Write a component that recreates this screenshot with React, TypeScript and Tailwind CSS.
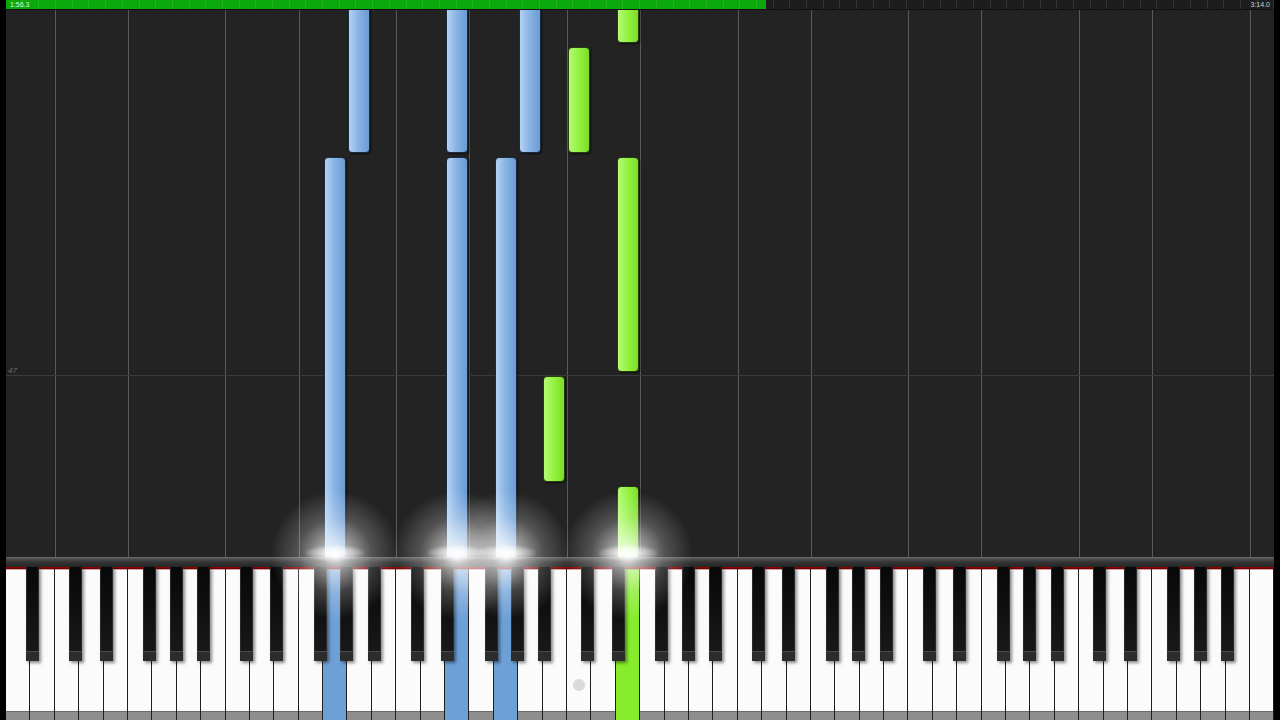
import React from 'react';

// 88-key layout: 52 white keys starting at A0
const W = 1268 / 52;
const ROLL_TOP = 10;
const NAMES = ['A', 'B', 'C', 'D', 'E', 'F', 'G'];
// black key left offset from the right boundary of the white key it follows
const BLACK_OFFSET: Record<string, number> = { A: -4, C: -10, D: -4, F: -9, G: -7 };

type Note = { key: number; y1: number; y2: number; hand: 'left' | 'right' };

const NOTES: Note[] = [
  { key: 14, y1: 0, y2: 153, hand: 'left' },
  { key: 18, y1: 0, y2: 153, hand: 'left' },
  { key: 21, y1: 0, y2: 153, hand: 'left' },
  { key: 13, y1: 157, y2: 575, hand: 'left' },
  { key: 18, y1: 157, y2: 575, hand: 'left' },
  { key: 20, y1: 157, y2: 575, hand: 'left' },
  { key: 25, y1: 0, y2: 43, hand: 'right' },
  { key: 23, y1: 47, y2: 153, hand: 'right' },
  { key: 25, y1: 157, y2: 372, hand: 'right' },
  { key: 22, y1: 376, y2: 482, hand: 'right' },
  { key: 25, y1: 486, y2: 575, hand: 'right' },
];

const PRESSED: Record<number, 'left' | 'right'> = { 13: 'left', 18: 'left', 20: 'left', 25: 'right' };

const GRID_KEYS = [2, 5, 9, 12, 16, 19, 23, 26, 30, 33, 37, 40, 44, 47, 51];

const GLOWS = [335, 457, 506, 628];

const TopBar: React.FC = () => {
  const ticks = Array.from({ length: 76 });
  return (
    <div className="relative h-[10px] bg-[#1d1d1d] border-b border-[#111]">
      <div className="absolute left-0 top-0 bottom-0 w-[760px] bg-[#0ba80b]" />
      <div className="absolute inset-0 flex">
        {ticks.map((_, i) => (
          <div key={i} className="flex-1 border-r border-white/10" />
        ))}
      </div>
      <span className="absolute left-[4px] top-[1px] text-[7px] leading-[8px] text-[#d8f5d8] font-['Liberation_Sans',sans-serif]">
        1:56.3
      </span>
      <span className="absolute right-[4px] top-[1px] text-[7px] leading-[8px] text-[#d0d0d0] font-['Liberation_Sans',sans-serif]">
        3:14.0
      </span>
    </div>
  );
};

const NoteBar: React.FC<{ note: Note }> = ({ note }) => {
  const left = note.key * W + 1;
  const top = note.y1 - ROLL_TOP;
  const height = note.y2 - note.y1;
  const cls =
    note.hand === 'left'
      ? 'bg-gradient-to-r from-[#b4d2f2] via-[#86b2e4] to-[#6b9bd3] border-[#1c2c40]'
      : 'bg-gradient-to-r from-[#b4fb72] via-[#92f23e] to-[#7edc26] border-[#263d10]';
  return (
    <div
      className={`absolute w-[22px] rounded-[4px] border shadow-[1px_1px_2px_rgba(0,0,0,0.6)] ${cls}`}
      style={{ left, top, height }}
    />
  );
};

const Roll: React.FC = () => (
  <div className="relative flex-1 bg-[#232323] overflow-hidden">
    {GRID_KEYS.map(k => (
      <div key={k} className="absolute top-0 bottom-0 w-px bg-[#5a5a5a]" style={{ left: k * W }} />
    ))}
    <div className="absolute left-0 right-0 top-[365px] h-px bg-[#3a3a3a]" />
    <span className="absolute left-[2px] top-[355px] text-[8px] italic text-[#6a6a6a] font-['Liberation_Sans',sans-serif]">
      47
    </span>
    {NOTES.map((n, i) => (
      <NoteBar key={i} note={n} />
    ))}
  </div>
);

const Keyboard: React.FC = () => {
  const whites = Array.from({ length: 52 }, (_, i) => i);
  const blacks = whites
    .filter(i => i < 51 && NAMES[i % 7] in BLACK_OFFSET)
    .map(i => (i + 1) * W + BLACK_OFFSET[NAMES[i % 7]]);

  return (
    <div className="relative">
      <div className="h-[10px] bg-gradient-to-b from-[#555] via-[#333] to-[#262626] border-t border-[#666]" />
      <div className="relative h-[153px] flex">
        {whites.map(i => {
          const p = PRESSED[i];
          const color =
            p === 'left' ? 'bg-[#6ea0d8]' : p === 'right' ? 'bg-[#86ec2c]' : 'bg-[#fbfbfb]';
          return (
            <div key={i} className="relative flex-1 flex flex-col border-r border-[#1e1e1e]">
              <div className={`flex-1 ${color}`} />
              <div className={`h-[9px] ${p ? color : 'bg-[#8e8e8e] border-t border-[#6a6a6a]'}`} />
            </div>
          );
        })}
        <div className="absolute left-0 right-0 top-0 h-[3px] bg-gradient-to-b from-[#a00000] via-[#700000] to-transparent" />
        {blacks.map((x, i) => (
          <div
            key={i}
            className="absolute top-0 w-[13px] h-[94px] flex flex-col bg-gradient-to-b from-[#080808] to-[#1a1a1a] shadow-[2px_2px_3px_rgba(0,0,0,0.45)]"
            style={{ left: x }}
          >
            <div className="flex-1 border-x border-[#2a2a2a]" />
            <div className="h-[10px] bg-[#2c2c2c] border-t border-[#4a4a4a]" />
          </div>
        ))}
        <div className="absolute w-[12px] h-[12px] rounded-full bg-[#dadada] top-[112px]" style={{ left: 23 * W + 6 }} />
      </div>
    </div>
  );
};

export default function App() {
  return (
    <div className="w-[1280px] h-[720px] bg-black flex px-[6px] overflow-hidden">
      <div className="relative flex-1 flex flex-col">
        <TopBar />
        <Roll />
        <Keyboard />
        {GLOWS.map(x => (
          <React.Fragment key={x}>
            <div
              className="absolute w-[130px] h-[130px] pointer-events-none bg-[radial-gradient(ellipse_at_center,rgba(255,255,255,0.95)_0%,rgba(255,255,255,0.6)_15%,rgba(255,255,255,0.22)_40%,rgba(255,255,255,0)_70%)]"
              style={{ left: x - 6 - 65, top: 555 - 65 }}
            />
            <div
              className="absolute w-[60px] h-[16px] pointer-events-none bg-[radial-gradient(ellipse_at_center,rgba(255,255,255,0.9)_0%,rgba(255,255,255,0.4)_45%,rgba(255,255,255,0)_75%)]"
              style={{ left: x - 6 - 30, top: 545 }}
            />
          </React.Fragment>
        ))}
      </div>
    </div>
  );
}
